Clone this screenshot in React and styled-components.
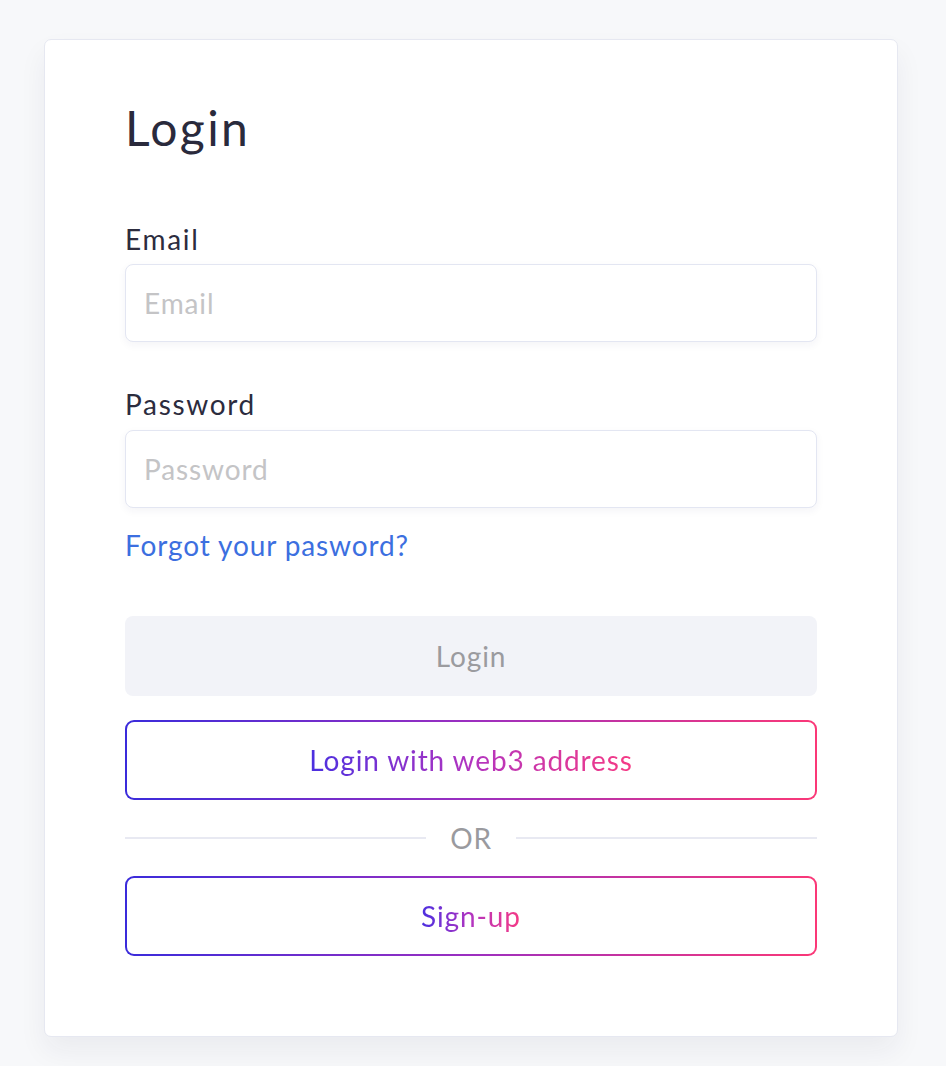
import React from "react";
import styled, { createGlobalStyle } from "styled-components";

const GlobalStyle = createGlobalStyle`
  * { box-sizing: border-box; }
  html, body { margin: 0; padding: 0; background: #f7f8fa; }
  body { font-family: Lato, "Open Sans", sans-serif; letter-spacing: 0.055em; }
`;

const Page = styled.div`
  min-height: 1066px;
  padding: 39px 48px 28px 44px;
`;

const Card = styled.div`
  background: #ffffff;
  border: 1px solid #e6e8f1;
  border-radius: 7px;
  box-shadow: 0 14px 28px rgba(30, 35, 70, 0.06);
  padding: 59px 80px 80px;
  display: flex;
  flex-direction: column;
`;

const Title = styled.h1`
  margin: 0 0 66px;
  font-size: 48px;
  line-height: 1.2;
  font-weight: 400;
  color: #2a2a3c;
  letter-spacing: 0.05em;
`;

const Field = styled.div`
  display: flex;
  flex-direction: column;
  gap: 8px;
  margin-bottom: ${(p) => p.$mb || 0}px;
`;

const Label = styled.label`
  font-size: 28px;
  line-height: 1.2;
  color: #2c2c3e;
  letter-spacing: 0.06em;
`;

const Input = styled.input`
  height: 78px;
  width: 100%;
  border: 1px solid #e3e6f2;
  border-radius: 8px;
  box-shadow: 0 3px 8px rgba(30, 40, 90, 0.05);
  padding: 0 18px;
  font-family: inherit;
  letter-spacing: inherit;
  font-size: 28px;
  color: #2c2c3e;
  outline: none;
  background: #fff;
  &::placeholder { color: #c4c4c6; }
`;

const Link = styled.a`
  margin-top: 21px;
  font-size: 28px;
  line-height: 1.2;
  color: #3c6fe0;
  text-decoration: none;
  align-self: flex-start;
`;

const Actions = styled.div`
  margin-top: 54px;
  display: flex;
  flex-direction: column;
`;

const GreyButton = styled.button`
  height: 80px;
  width: 100%;
  border: none;
  border-radius: 8px;
  background: #f2f3f8;
  color: #9b9b9f;
  font-family: inherit;
  letter-spacing: inherit;
  font-size: 28px;
`;

const GradientButton = styled.button`
  height: 80px;
  width: 100%;
  border: 2px solid transparent;
  border-radius: 9px;
  background: linear-gradient(#fff, #fff) padding-box,
    linear-gradient(90deg, #3a2bdb 0%, #9c2fc0 50%, #fb3877 100%) border-box;
  font-family: inherit;
  letter-spacing: inherit;
  font-size: 28px;
  margin-top: ${(p) => p.$mt || 0}px;
`;

const GradientText = styled.span`
  background: linear-gradient(90deg, #4a2fe0 0%, #b234c0 50%, #f63a84 100%);
  -webkit-background-clip: text;
  background-clip: text;
  color: transparent;
`;

const Divider = styled.div`
  display: grid;
  grid-template-columns: 1fr auto 1fr;
  align-items: center;
  gap: 24px;
  height: 76px;
`;

const Line = styled.div`
  height: 2px;
  background: #e8e9f2;
`;

const Or = styled.span`
  font-size: 28px;
  color: #9a9a9e;
`;

export default function App() {
  return (
    <>
      <GlobalStyle />
      <Page>
        <Card>
          <Title>Login</Title>
          <Field $mb={46}>
            <Label>Email</Label>
            <Input placeholder="Email" />
          </Field>
          <Field>
            <Label>Password</Label>
            <Input placeholder="Password" type="password" />
          </Field>
          <Link href="#">Forgot your pasword?</Link>
          <Actions>
            <GreyButton>Login</GreyButton>
            <GradientButton $mt={24}>
              <GradientText>Login with web3 address</GradientText>
            </GradientButton>
            <Divider>
              <Line />
              <Or>OR</Or>
              <Line />
            </Divider>
            <GradientButton>
              <GradientText>Sign-up</GradientText>
            </GradientButton>
          </Actions>
        </Card>
      </Page>
    </>
  );
}
